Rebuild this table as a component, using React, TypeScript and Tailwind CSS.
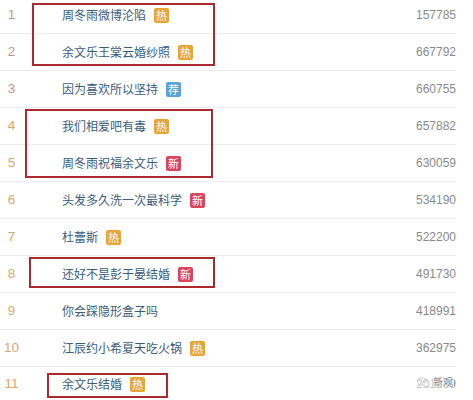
import type { ReactNode } from 'react';

type Tag = 'hot' | 'new' | 'rec';

interface Item {
  rank: number;
  title: string;
  tag?: Tag;
  count: string;
}

const ITEMS: Item[] = [
  { rank: 1, title: '周冬雨微博沦陷', tag: 'hot', count: '157785' },
  { rank: 2, title: '余文乐王棠云婚纱照', tag: 'hot', count: '667792' },
  { rank: 3, title: '因为喜欢所以坚持', tag: 'rec', count: '660755' },
  { rank: 4, title: '我们相爱吧有毒', tag: 'hot', count: '657882' },
  { rank: 5, title: '周冬雨祝福余文乐', tag: 'new', count: '630059' },
  { rank: 6, title: '头发多久洗一次最科学', tag: 'new', count: '534190' },
  { rank: 7, title: '杜蕾斯', tag: 'hot', count: '522200' },
  { rank: 8, title: '还好不是彭于晏结婚', tag: 'new', count: '491730' },
  { rank: 9, title: '你会踩隐形盒子吗', count: '418991' },
  { rank: 10, title: '江辰约小希夏天吃火锅', tag: 'hot', count: '362975' },
  { rank: 11, title: '余文乐结婚', tag: 'hot', count: '261289' },
];

const FONT = '"Noto Sans CJK SC", "Noto Sans", sans-serif';
const NUM_FONT = '"Liberation Sans", Arial, sans-serif';

function Badge({ tag }: { tag: Tag }) {
  const map: Record<Tag, { label: string; cls: string }> = {
    hot: { label: '热', cls: 'bg-[#e8a53a]' },
    new: { label: '新', cls: 'bg-[#d9455c]' },
    rec: { label: '荐', cls: 'bg-[#5aa2d8]' },
  };
  const b = map[tag];
  return (
    <span
      className={`ml-[8px] flex h-[15px] w-[15px] items-center justify-center rounded-[2px] text-[11px] leading-none text-white ${b.cls}`}
    >
      {b.label}
    </span>
  );
}

function Row({ item, first, last }: { item: Item; first: boolean; last: boolean }) {
  return (
    <div
      className={`flex items-center ${first ? 'h-[34px] pb-[3px]' : last ? 'h-[34px]' : 'h-[37px]'} ${
        last ? '' : 'border-b border-[#ececec]'
      }`}
    >
      <span
        className={`w-[23px] text-center text-[13.5px] ${item.rank <= 3 ? 'text-[#cf8f86]' : 'text-[#d9a76e]'}`}
        style={{ fontFamily: NUM_FONT }}
      >
        {item.rank}
      </span>
      <span className="ml-[39px] text-[12px] text-[#3a5d7e]">{item.title}</span>
      {item.tag && <Badge tag={item.tag} />}
      <span className="ml-auto text-[12px] text-[#8a8a8a]" style={{ fontFamily: NUM_FONT }}>
        {item.count}
      </span>
    </div>
  );
}

function Mark({ className }: { className: string }): ReactNode {
  return <div className={`pointer-events-none absolute border-2 border-[#a92a2f] ${className}`} />;
}

export default function App() {
  return (
    <div className="h-[400px] w-[473px] overflow-hidden bg-white" style={{ fontFamily: FONT }}>
      <div className="relative w-[456px]">
        {ITEMS.map((item, i) => (
          <Row key={item.rank} item={item} first={i === 0} last={i === ITEMS.length - 1} />
        ))}

        {/* red annotation boxes */}
        <Mark className="left-[32px] top-[3px] h-[63px] w-[183px]" />
        <Mark className="left-[25px] top-[109px] h-[69px] w-[188px]" />
        <Mark className="left-[29px] top-[257px] h-[31px] w-[186px]" />
        <Mark className="left-[47px] top-[373px] h-[25px] w-[121px]" />

        {/* watermark */}
        <div className="pointer-events-none absolute left-[416px] top-[374px] flex h-[16px] items-center gap-[3px] whitespace-nowrap bg-white/55 px-[1px]">
          <svg width="13" height="11" viewBox="0 0 14 12" className="opacity-50">
            <ellipse cx="5.5" cy="5" rx="5" ry="4" fill="none" stroke="#9a9a9a" strokeWidth="1" />
            <ellipse cx="9.5" cy="7.5" rx="4" ry="3.2" fill="#fff" stroke="#9a9a9a" strokeWidth="1" />
            <circle cx="4" cy="4" r="0.7" fill="#9a9a9a" />
            <circle cx="7" cy="4" r="0.7" fill="#9a9a9a" />
          </svg>
          <span className="text-[10px] leading-none text-[#8c8c8c]">新观</span>
        </div>
      </div>
    </div>
  );
}
